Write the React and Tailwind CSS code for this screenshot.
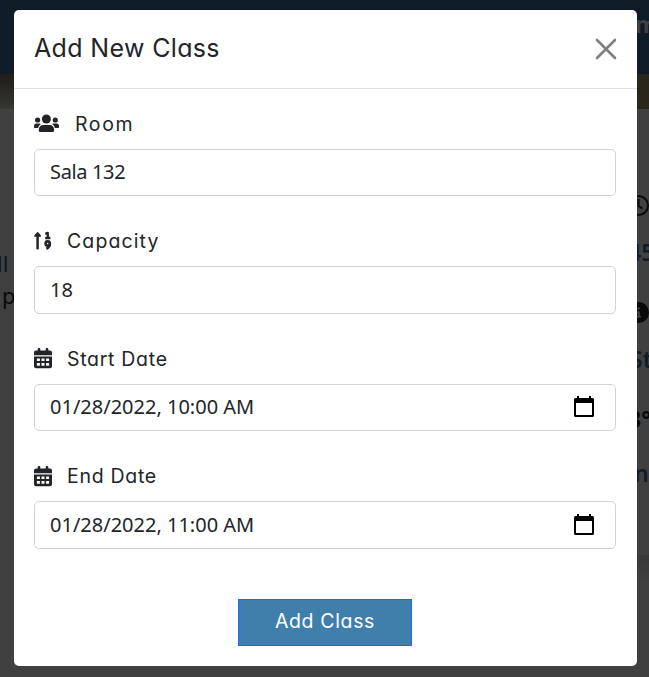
import { FaCircleInfo } from "react-icons/fa6";

const geo = "font-['Inter'] [font-feature-settings:'cv11','ss03']";

function UsersIcon() {
  return (
    <svg width="26" height="20" viewBox="0 0 26 20" fill="currentColor" className="mr-[15px]">
      <circle cx="12.400" cy="5" r="4.500" />
      <circle cx="3.600" cy="6" r="2.600" />
      <circle cx="21.300" cy="6" r="2.600" />
      <path d="M9.200 11h6.500a4.400 4.400 0 0 1 4.400 4.400v1.200a1.500 1.500 0 0 1-1.500 1.500H6.300a1.500 1.500 0 0 1-1.500-1.500v-1.200a4.400 4.400 0 0 1 4.400-4.400z" />
      <path d="M2.500 9.500h3.300l1 .6A6 6 0 0 0 4.100 14H.7a.7.700 0 0 1-.7-.7v-1.300a2.500 2.500 0 0 1 2.500-2.500zM22.500 9.500h-3.300l-1 .6a6 6 0 0 1 2.700 3.900h3.400a.7.700 0 0 0 .7-.7v-1.300a2.500 2.500 0 0 0-2.500-2.500z" />
    </svg>
  );
}

function SortIcon() {
  return (
    <svg width="18" height="20" viewBox="0 0 18 20" fill="none" stroke="currentColor" strokeWidth="2.600" className="mr-[15px]">
      <path d="M3.600 4v13.200" strokeWidth="2.500" strokeLinecap="round" />
      <path d="M3.600 1.700L.7 5h5.800z" fill="currentColor" strokeWidth="1.300" strokeLinejoin="round" />
      <path d="M11.300 2.900l2.500-1v5M11.200 7h5.200" strokeWidth="2.300" strokeLinejoin="round" />
      <circle cx="13.700" cy="12.500" r="2.100" />
      <path d="M15.900 12.500c0 2.500-1.300 4.200-3.500 5.300" />
    </svg>
  );
}

function CalendarIcon() {
  return (
    <svg width="18" height="21" viewBox="0 0 18 21" fill="currentColor" fillRule="evenodd" className="ml-[-0.5px] mr-[15.500px]">
      <path d="M3.700 1.200a1.300 1.300 0 0 1 2.600 0V2.500h5.400V1.200a1.300 1.300 0 0 1 2.600 0V2.500H16a2 2 0 0 1 2 2v2.700H0V4.500a2 2 0 0 1 2-2h1.700z" />
      <path d="M0 8.500h18V18.300a2 2 0 0 1-2 2H2a2 2 0 0 1-2-2zM2.900 10.400v2.700h3v-2.700zM7.500 10.400v2.700h3v-2.700zM12.100 10.400v2.700h3v-2.700zM2.900 15v2.700h3V15zM7.500 15v2.700h3V15zM12.100 15v2.700h3V15z" />
    </svg>
  );
}

function DateIcon() {
  return (
    <svg width="20" height="22" viewBox="0 0 20 22" className="mr-[6px]">
      <path fill="#000" fillRule="evenodd" d="M3 0h2v2h10V0h2v2h1.500a1.500 1.500 0 0 1 1.500 1.500v16a1.500 1.500 0 0 1-1.500 1.500H1.500A1.500 1.500 0 0 1 0 19.500v-16A1.500 1.500 0 0 1 1.500 2H3zM2 7v12h16V7z" />
    </svg>
  );
}

function Field({ icon, label, value, date, labelClass, valueClass = "tracking-normal" }) {
  return (
    <div className="flex h-[117.4px] flex-col gap-[10px]">
      <div className="flex h-[30px] items-center text-[#212529]">
        {icon}
        <span className={`${geo} whitespace-nowrap text-[19.500px] leading-[30px] ${labelClass}`}>{label}</span>
      </div>
      <div className="flex h-[47.400px] items-center justify-between rounded-[5px] border border-[#ced4da] px-[15px] text-[#212529]">
        <span className={`whitespace-nowrap pb-[0.5px] font-['Noto_Sans',sans-serif] text-[20px] leading-[30px] ${valueClass}`}>{value}</span>
        {date && <DateIcon />}
      </div>
    </div>
  );
}

function Backdrop() {
  return (
    <div className="absolute inset-0 flex flex-col overflow-hidden bg-[#404040] font-['Noto_Sans',sans-serif] text-[23px] leading-[32px]">
      <div className="flex h-[74px] shrink-0 justify-end bg-[#0f1b27] pt-[8px] font-bold text-[#404040]">
        <span className="w-[14px]">m</span>
      </div>
      <div className="flex h-[35px] shrink-0 justify-between">
        <div className="w-[18px] bg-gradient-to-b from-[#211d18] to-[#373630]" />
        <div className="w-[18px] bg-[#29261c]" />
      </div>
      <div className="flex grow justify-between">
        <div className="flex w-[18px] flex-col whitespace-nowrap pt-[138px] text-[22px]">
          <span className="-indent-[3px] text-[#0b1725]">ll</span>
          <span className="pl-[2px] text-[#08090a]">p</span>
        </div>
        <div className="flex w-[21px] flex-col whitespace-nowrap pt-[86px] font-semibold text-[#101b2b]">
          <svg className="shrink-0" width="21" height="21" viewBox="0 0 21 21" fill="none" stroke="#08090a" strokeWidth="2">
            <circle cx="10.500" cy="10.500" r="9.500" />
            <path d="M10.500 4v7l4 2.500" />
          </svg>
          <span className="mt-[20px]">45</span>
          <FaCircleInfo className="mt-[34px] size-[21px] shrink-0 text-[#08090a]" />
          <span className="mt-[20px] pl-[2px]">St</span>
          <span className="mt-[28px] font-bold text-[#08090a]">3°</span>
          <span className="mt-[22px] pl-[6px]">n</span>
          <div className="mt-[66px] h-[123px] bg-gradient-to-b from-[#393939] to-[#404040] to-25%" />
        </div>
      </div>
    </div>
  );
}

export default function App() {
  return (
    <div className="relative h-[677px] w-[649px] overflow-hidden pl-[14px] pt-[10px]">
      <Backdrop />
      <div className="relative h-[656px] w-[623px] rounded-[5px] bg-white">
        <header className="flex h-[79px] items-center justify-between border-b border-[#dee2e6] pl-[20px] pr-[21px]">
          <h1 className={`${geo} whitespace-nowrap pb-[2px] text-[25px] leading-[38px] tracking-[0.35px] text-[#212529]`}>Add New Class</h1>
          <svg width="20" height="20" viewBox="0 0 20 20" className="overflow-visible">
            <path d="M1 1l18 18M19 1L1 19" stroke="#7f7f7f" strokeWidth="2.600" strokeLinecap="round" />
          </svg>
        </header>
        <main className="pl-[20px] pr-[21px] pt-[20px]">
          <Field icon={<UsersIcon />} label="Room" value="Sala 132" labelClass="tracking-[1.6px]" valueClass="tracking-[-0.35px]" />
          <Field icon={<SortIcon />} label="Capacity" value="18" labelClass="tracking-[1.1px]" />
          <Field icon={<CalendarIcon />} label="Start Date" value="01/28/2022, 10:00 AM" date labelClass="tracking-[0.7px]" />
          <Field icon={<CalendarIcon />} label="End Date" value="01/28/2022, 11:00 AM" date labelClass="tracking-[0.7px]" />
          <div className="flex justify-center pt-[20.400px]">
            <button className={`${geo} h-[47px] w-[174px] whitespace-nowrap border border-[#0d6efd] bg-[#407fab] pb-[2px] text-[19.500px] leading-[30px] tracking-[0.65px] text-white`}>Add Class</button>
          </div>
        </main>
      </div>
    </div>
  );
}
